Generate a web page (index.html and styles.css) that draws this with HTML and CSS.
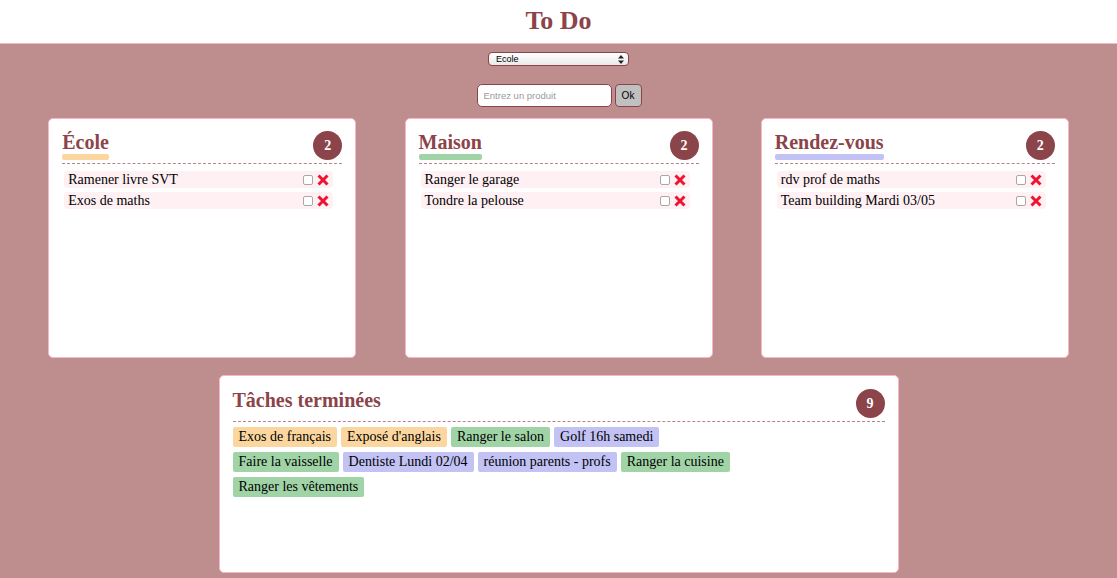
FILE: index.html
```html
<!DOCTYPE html>
<html lang="fr">
<head>
<meta charset="utf-8">
<title>To Do</title>
<link rel="stylesheet" href="styles.css">
</head>
<body>
<header class="top">
  <h1 class="app-title">To Do</h1>
</header>
<main class="page">
  <div class="controls">
    <div class="select-wrap">
      <select class="cat-select">
        <option>Ecole</option>
        <option>Maison</option>
        <option>Rendez-vous</option>
      </select>
      <svg class="select-arrows" width="6" height="9" viewBox="0 0 6 9"><path d="M3 0 L6 3.5 H0 Z M0 5.5 H6 L3 9 Z" fill="#222"/></svg>
    </div>
    <div class="add-row">
      <input class="add-input" type="text" placeholder="Entrez un produit">
      <button class="add-btn">Ok</button>
    </div>
  </div>

  <div class="lists">
    <section class="card">
      <div class="card-head">
        <div class="title-wrap">
          <h2 class="card-title">École</h2>
          <div class="bar bar-orange"></div>
        </div>
        <span class="badge">2</span>
      </div>
      <ul class="items">
        <li class="item"><span class="item-text">Ramener livre SVT</span><input type="checkbox" class="check"><svg class="del" width="12" height="12" viewBox="0 0 12 12"><path d="M1.5 1.5 L10.5 10.5 M10.5 1.5 L1.5 10.5"/></svg></li>
        <li class="item"><span class="item-text">Exos de maths</span><input type="checkbox" class="check"><svg class="del" width="12" height="12" viewBox="0 0 12 12"><path d="M1.5 1.5 L10.5 10.5 M10.5 1.5 L1.5 10.5"/></svg></li>
      </ul>
    </section>
    <section class="card">
      <div class="card-head">
        <div class="title-wrap">
          <h2 class="card-title">Maison</h2>
          <div class="bar bar-green"></div>
        </div>
        <span class="badge">2</span>
      </div>
      <ul class="items">
        <li class="item"><span class="item-text">Ranger le garage</span><input type="checkbox" class="check"><svg class="del" width="12" height="12" viewBox="0 0 12 12"><path d="M1.5 1.5 L10.5 10.5 M10.5 1.5 L1.5 10.5"/></svg></li>
        <li class="item"><span class="item-text">Tondre la pelouse</span><input type="checkbox" class="check"><svg class="del" width="12" height="12" viewBox="0 0 12 12"><path d="M1.5 1.5 L10.5 10.5 M10.5 1.5 L1.5 10.5"/></svg></li>
      </ul>
    </section>
    <section class="card">
      <div class="card-head">
        <div class="title-wrap">
          <h2 class="card-title">Rendez-vous</h2>
          <div class="bar bar-blue"></div>
        </div>
        <span class="badge">2</span>
      </div>
      <ul class="items">
        <li class="item"><span class="item-text">rdv prof de maths</span><input type="checkbox" class="check"><svg class="del" width="12" height="12" viewBox="0 0 12 12"><path d="M1.5 1.5 L10.5 10.5 M10.5 1.5 L1.5 10.5"/></svg></li>
        <li class="item"><span class="item-text">Team building Mardi 03/05</span><input type="checkbox" class="check"><svg class="del" width="12" height="12" viewBox="0 0 12 12"><path d="M1.5 1.5 L10.5 10.5 M10.5 1.5 L1.5 10.5"/></svg></li>
      </ul>
    </section>
  </div>

  <section class="card card-done">
    <div class="card-head">
      <h2 class="card-title">Tâches terminées</h2>
      <span class="badge">9</span>
    </div>
    <div class="tags">
      <span class="tag tag-orange">Exos de français</span>
      <span class="tag tag-orange">Exposé d'anglais</span>
      <span class="tag tag-green">Ranger le salon</span>
      <span class="tag tag-blue">Golf 16h samedi</span>
      <span class="tag tag-green">Faire la vaisselle</span>
      <span class="tag tag-blue">Dentiste Lundi 02/04</span>
      <span class="tag tag-blue">réunion parents - profs</span>
      <span class="tag tag-green">Ranger la cuisine</span>
      <span class="tag tag-green">Ranger les vêtements</span>
    </div>
  </section>
</main>
</body>
</html>
```
FILE: styles.css
```css
* { box-sizing: border-box; }

html, body {
  margin: 0;
  padding: 0;
}

body {
  background: #be8e8e;
  font-family: "Liberation Serif", "Times New Roman", serif;
  color: #000;
  height: 578px;
  overflow: hidden;
}

.top {
  background: #fff;
  height: 44px;
  border-bottom: 1px solid #f4b6c0;
  display: flex;
  justify-content: center;
  align-items: center;
}

.app-title {
  margin: 0;
  font-size: 26px;
  font-weight: bold;
  color: #8b4449;
  line-height: 30px;
  padding-bottom: 1px;
}

.page {
  display: flex;
  flex-direction: column;
}

.controls {
  display: flex;
  flex-direction: column;
  align-items: center;
  padding-top: 8px;
}

.select-wrap {
  position: relative;
  width: 141px;
  height: 14px;
}

.cat-select {
  display: block;
  appearance: none;
  -webkit-appearance: none;
  width: 141px;
  height: 14px;
  margin: 0;
  padding: 0 0 0 7px;
  border: 1px solid #8b4449;
  border-radius: 4px;
  background: linear-gradient(#ffffff, #e9e9e9);
  font-family: "Liberation Sans", Arial, sans-serif;
  font-size: 9px;
  line-height: 12px;
  color: #000;
}

.select-arrows {
  position: absolute;
  right: 5px;
  top: 3px;
  pointer-events: none;
}

.add-row {
  display: flex;
  gap: 3px;
  margin-top: 18px;
  margin-left: 1px;
}

.add-input {
  width: 135px;
  height: 23px;
  margin: 0;
  padding: 0 6px;
  border: 1px solid #8b4449;
  border-radius: 5px;
  background: #fff;
  font-family: "Liberation Sans", Arial, sans-serif;
  font-size: 9.5px;
  outline: none;
}

.add-input::placeholder {
  color: #9a9a9a;
}

.add-btn {
  width: 27px;
  height: 23px;
  margin: 0;
  padding: 0;
  border: 1px solid #8b4449;
  border-radius: 4px;
  background: #c0c0c0;
  font-family: "Liberation Sans", Arial, sans-serif;
  font-size: 10px;
  color: #000;
}

.lists {
  display: flex;
  justify-content: space-evenly;
  margin-top: 11px;
}

.card {
  background: #fff;
  border: 1px solid #f7b8c4;
  border-radius: 5px;
  padding: 12px 13px;
}

.lists .card {
  width: 308px;
  height: 240px;
}

.card-head {
  display: flex;
  justify-content: space-between;
  align-items: flex-start;
  padding-bottom: 3px;
  border-bottom: 1px dashed #b9838a;
}

.title-wrap {
  display: flex;
  flex-direction: column;
}

.card-title {
  margin: 0;
  font-size: 20px;
  line-height: 22px;
  font-weight: bold;
  color: #8b4449;
}

.bar {
  height: 6px;
  margin-top: 1px;
  border-radius: 2px;
}

.bar-orange, .tag-orange { background: #fbd79f; }
.bar-green, .tag-green { background: #a0d4a7; }
.bar-blue, .tag-blue { background: #c2c2f4; }

.badge {
  width: 29px;
  height: 29px;
  border-radius: 50%;
  background: #8b4449;
  color: #fff;
  font-weight: bold;
  font-size: 14px;
  display: flex;
  align-items: center;
  justify-content: center;
}

.items {
  list-style: none;
  margin: 7px 9px 0 2px;
  padding: 0;
  display: flex;
  flex-direction: column;
  gap: 4px;
}

.item {
  display: flex;
  align-items: center;
  height: 17px;
  padding: 0 4px 0 4px;
  background: #fff0f4;
  border-radius: 4px;
  font-size: 14px;
  line-height: 17px;
}

.item-text {
  flex: 1;
}

.check {
  appearance: none;
  -webkit-appearance: none;
  width: 10px;
  height: 10px;
  margin: 0 4px 0 0;
  border: 1px solid #a8a8a8;
  border-radius: 2px;
  background: #fff;
}

.del {
  display: block;
}

.del path {
  stroke: #ee1431;
  stroke-width: 3;
  fill: none;
}

.card-done {
  width: 680px;
  height: 198px;
  margin: 17px auto 0;
  padding: 13px 13px;
}

.tags {
  display: flex;
  flex-wrap: wrap;
  gap: 5px 4px;
  margin-top: 5px;
  max-width: 520px;
}

.tag {
  font-size: 14px;
  line-height: 16px;
  padding: 2px 6px;
  border-radius: 2px;
}
```
